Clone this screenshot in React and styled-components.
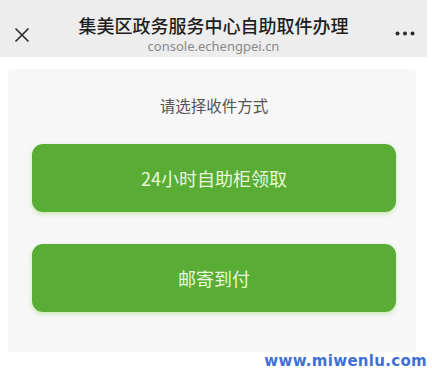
import React from "react";
import styled, { createGlobalStyle } from "styled-components";

const Global = createGlobalStyle`
  html, body { margin: 0; padding: 0; background: #ffffff; }
  body { font-family: "Noto Sans CJK SC", "Noto Sans", sans-serif; }
  * { box-sizing: border-box; }
`;

const Page = styled.div`
  position: relative;
  width: 432px;
  height: 372px;
  overflow: hidden;
  background: #ffffff;
`;

const Header = styled.header`
  width: 427px;
  height: 57px;
  background: #ededed;
  display: grid;
  grid-template-columns: 44px 1fr 44px;
  align-items: center;
`;

const IconBtn = styled.div`
  display: flex;
  align-items: center;
  justify-content: center;
  height: 100%;
  padding-top: ${(p) => p.$top || 0}px;
`;

const TitleBox = styled.div`
  align-self: start;
  display: flex;
  flex-direction: column;
  align-items: center;
  padding-top: 13px;
`;

const Title = styled.div`
  font-size: 18px;
  font-weight: 500;
  color: #1e1e1e;
  line-height: 24px;
`;

const Sub = styled.div`
  font-family: "Noto Sans", "Open Sans", sans-serif;
  font-size: 13px;
  color: #8a8a8a;
  line-height: 18px;
`;

const Card = styled.main`
  margin: 12px 16px 0 8px;
  height: 283px;
  background: #f7f7f7;
  border-radius: 4px;
  padding: 24px 20px 0 24px;
  display: flex;
  flex-direction: column;
`;

const Prompt = styled.div`
  text-align: center;
  font-size: 15.5px;
  color: #555555;
  line-height: 24px;
  margin-bottom: 27px;
`;

const Choice = styled.button`
  flex: none;
  height: 68px;
  border: none;
  border-radius: 11px;
  background: #5aad34;
  color: #e9f7dc;
  font-family: "Noto Sans CJK SC", "Noto Sans", sans-serif;
  font-size: 18px;
  display: flex;
  align-items: center;
  justify-content: center;
  box-shadow: 0 2px 4px rgba(140, 210, 100, 0.45);
  margin-bottom: 32px;
  padding: 0;
`;

const Watermark = styled.div`
  position: absolute;
  right: 5px;
  bottom: 3px;
  font-family: "DejaVu Sans", sans-serif;
  font-weight: bold;
  font-size: 15px;
  line-height: 16px;
  color: #3f70d6;
  letter-spacing: 0.3px;
`;

export default function App() {
  return (
    <Page>
      <Global />
      <Header>
        <IconBtn $top={12}>
          <svg width="16" height="16" viewBox="0 0 16 16">
            <path d="M1.5 1.5 L14.5 14.5 M14.5 1.5 L1.5 14.5" stroke="#2a2a2a" strokeWidth="1.6" fill="none" />
          </svg>
        </IconBtn>
        <TitleBox>
          <Title>集美区政务服务中心自助取件办理</Title>
          <Sub>console.echengpei.cn</Sub>
        </TitleBox>
        <IconBtn $top={10}>
          <svg width="20" height="5" viewBox="0 0 20 5">
            <circle cx="2.5" cy="2.5" r="2" fill="#2a2a2a" />
            <circle cx="10" cy="2.5" r="2" fill="#2a2a2a" />
            <circle cx="17.5" cy="2.5" r="2" fill="#2a2a2a" />
          </svg>
        </IconBtn>
      </Header>
      <Card>
        <Prompt>请选择收件方式</Prompt>
        <Choice>24小时自助柜领取</Choice>
        <Choice>邮寄到付</Choice>
      </Card>
      <Watermark>www.miwenlu.com</Watermark>
    </Page>
  );
}
